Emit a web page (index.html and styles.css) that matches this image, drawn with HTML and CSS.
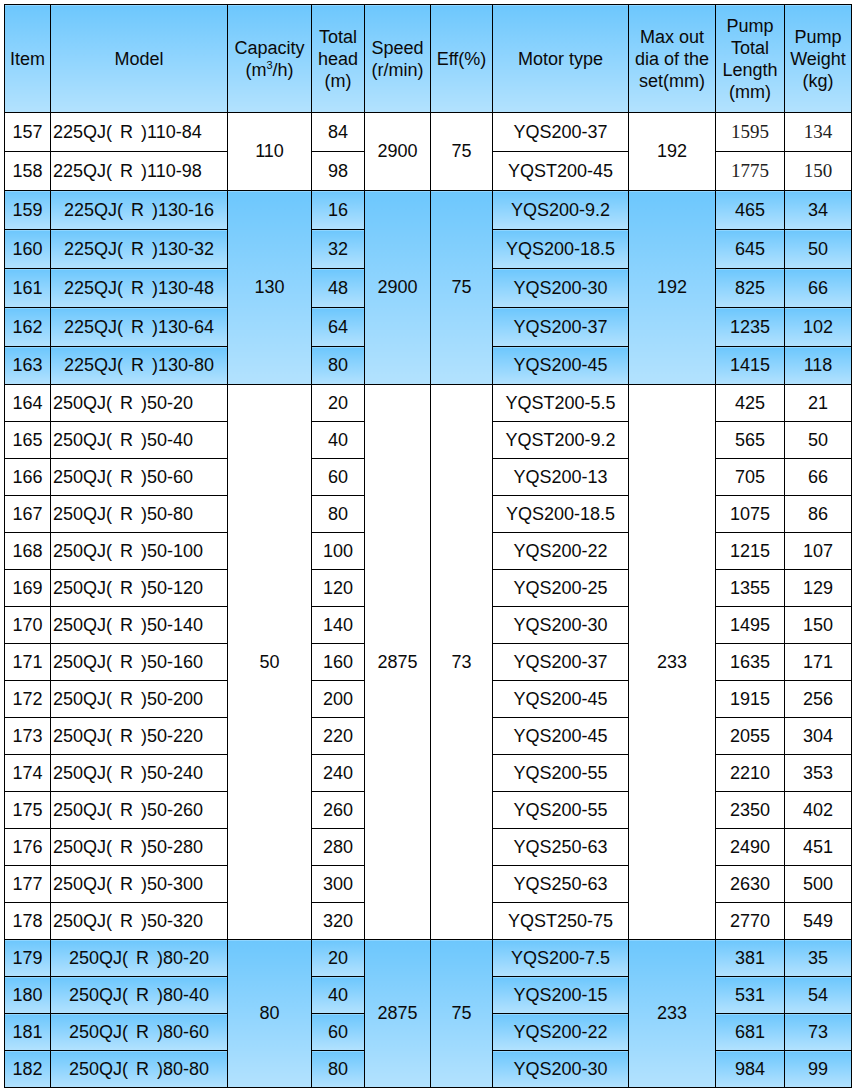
FILE: index.html
```html
<!DOCTYPE html>
<html>
<head>
<meta charset="utf-8">
<link rel="stylesheet" href="styles.css">
</head>
<body>
<table class="spec">
<colgroup>
<col class="c1"><col class="c2"><col class="c3"><col class="c4"><col class="c5"><col class="c6"><col class="c7"><col class="c8"><col class="c9"><col class="c10">
</colgroup>
<tr class="head">
<td>Item</td>
<td>Model</td>
<td>Capacity<br>(m<sup>3</sup>/h)</td>
<td>Total<br>head<br>(m)</td>
<td>Speed<br>(r/min)</td>
<td>Eff(%)</td>
<td>Motor type</td>
<td>Max out<br>dia of the<br>set(mm)</td>
<td>Pump<br>Total<br>Length<br>(mm)</td>
<td>Pump<br>Weight<br>(kg)</td>
</tr>

<tr class="r1"><td>157</td><td class="l">225QJ( R )110-84</td><td rowspan="2">110</td><td>84</td><td rowspan="2">2900</td><td rowspan="2">75</td><td>YQS200-37</td><td rowspan="2">192</td><td class="serif">1595</td><td class="serif">134</td></tr>
<tr class="r1"><td>158</td><td class="l">225QJ( R )110-98</td><td>98</td><td>YQST200-45</td><td class="serif">1775</td><td class="serif">150</td></tr>

<tr class="r1 blue"><td>159</td><td>225QJ( R )130-16</td><td rowspan="5">130</td><td>16</td><td rowspan="5">2900</td><td rowspan="5">75</td><td>YQS200-9.2</td><td rowspan="5">192</td><td>465</td><td>34</td></tr>
<tr class="r1 blue"><td>160</td><td>225QJ( R )130-32</td><td>32</td><td>YQS200-18.5</td><td>645</td><td>50</td></tr>
<tr class="r1 blue"><td>161</td><td>225QJ( R )130-48</td><td>48</td><td>YQS200-30</td><td>825</td><td>66</td></tr>
<tr class="r1 blue"><td>162</td><td>225QJ( R )130-64</td><td>64</td><td>YQS200-37</td><td>1235</td><td>102</td></tr>
<tr class="r1b blue"><td>163</td><td>225QJ( R )130-80</td><td>80</td><td>YQS200-45</td><td>1415</td><td>118</td></tr>

<tr class="r2"><td>164</td><td class="l">250QJ( R )50-20</td><td rowspan="15">50</td><td>20</td><td rowspan="15">2875</td><td rowspan="15">73</td><td>YQST200-5.5</td><td rowspan="15">233</td><td>425</td><td>21</td></tr>
<tr class="r2"><td>165</td><td class="l">250QJ( R )50-40</td><td>40</td><td>YQST200-9.2</td><td>565</td><td>50</td></tr>
<tr class="r2"><td>166</td><td class="l">250QJ( R )50-60</td><td>60</td><td>YQS200-13</td><td>705</td><td>66</td></tr>
<tr class="r2"><td>167</td><td class="l">250QJ( R )50-80</td><td>80</td><td>YQS200-18.5</td><td>1075</td><td>86</td></tr>
<tr class="r2"><td>168</td><td class="l">250QJ( R )50-100</td><td>100</td><td>YQS200-22</td><td>1215</td><td>107</td></tr>
<tr class="r2"><td>169</td><td class="l">250QJ( R )50-120</td><td>120</td><td>YQS200-25</td><td>1355</td><td>129</td></tr>
<tr class="r2"><td>170</td><td class="l">250QJ( R )50-140</td><td>140</td><td>YQS200-30</td><td>1495</td><td>150</td></tr>
<tr class="r2"><td>171</td><td class="l">250QJ( R )50-160</td><td>160</td><td>YQS200-37</td><td>1635</td><td>171</td></tr>
<tr class="r2"><td>172</td><td class="l">250QJ( R )50-200</td><td>200</td><td>YQS200-45</td><td>1915</td><td>256</td></tr>
<tr class="r2"><td>173</td><td class="l">250QJ( R )50-220</td><td>220</td><td>YQS200-45</td><td>2055</td><td>304</td></tr>
<tr class="r2"><td>174</td><td class="l">250QJ( R )50-240</td><td>240</td><td>YQS200-55</td><td>2210</td><td>353</td></tr>
<tr class="r2"><td>175</td><td class="l">250QJ( R )50-260</td><td>260</td><td>YQS200-55</td><td>2350</td><td>402</td></tr>
<tr class="r2"><td>176</td><td class="l">250QJ( R )50-280</td><td>280</td><td>YQS250-63</td><td>2490</td><td>451</td></tr>
<tr class="r2"><td>177</td><td class="l">250QJ( R )50-300</td><td>300</td><td>YQS250-63</td><td>2630</td><td>500</td></tr>
<tr class="r2"><td>178</td><td class="l">250QJ( R )50-320</td><td>320</td><td>YQST250-75</td><td>2770</td><td>549</td></tr>

<tr class="r2 blue"><td>179</td><td>250QJ( R )80-20</td><td rowspan="4">80</td><td>20</td><td rowspan="4">2875</td><td rowspan="4">75</td><td>YQS200-7.5</td><td rowspan="4">233</td><td>381</td><td>35</td></tr>
<tr class="r2 blue"><td>180</td><td>250QJ( R )80-40</td><td>40</td><td>YQS200-15</td><td>531</td><td>54</td></tr>
<tr class="r2 blue"><td>181</td><td>250QJ( R )80-60</td><td>60</td><td>YQS200-22</td><td>681</td><td>73</td></tr>
<tr class="r2 blue"><td>182</td><td>250QJ( R )80-80</td><td>80</td><td>YQS200-30</td><td>984</td><td>99</td></tr>
</table>
</body>
</html>
```

FILE: styles.css
```css
html, body {
  margin: 0;
  padding: 0;
  background: #ffffff;
}

.spec {
  margin: 4px 0 0 4px;
  border-collapse: collapse;
  table-layout: fixed;
  width: 848px;
  font-family: "Liberation Sans", Arial, sans-serif;
  font-size: 18px;
  color: #0a0a0a;
}

.c1 { width: 46px; }
.c2 { width: 177px; }
.c3 { width: 84px; }
.c4 { width: 53px; }
.c5 { width: 66px; }
.c6 { width: 62px; }
.c7 { width: 136px; }
.c8 { width: 87px; }
.c9 { width: 69px; }
.c10 { width: 67px; }

.spec td {
  border: 1px solid #000000;
  padding: 0;
  text-align: center;
  vertical-align: middle;
  white-space: nowrap;
  overflow: hidden;
}

.head td {
  height: 107px;
  line-height: 22px;
  background: linear-gradient(#6dc7fd, #b3e2fe);
}

.head sup {
  font-size: 11px;
  line-height: 0;
  vertical-align: 7px;
}

.r1 td { height: 38px; }
.r1b td { height: 37px; }
.r2 td { height: 36px; }

.blue td {
  background: linear-gradient(#6dc7fd, #b3e2fe);
}

.spec td.l {
  text-align: left;
  padding-left: 2px;
}

.spec td:nth-child(2) {
  word-spacing: 3px;
}

.spec td.serif {
  font-family: "Liberation Serif", "Times New Roman", serif;
  font-size: 19px;
  color: #222222;
}
```
